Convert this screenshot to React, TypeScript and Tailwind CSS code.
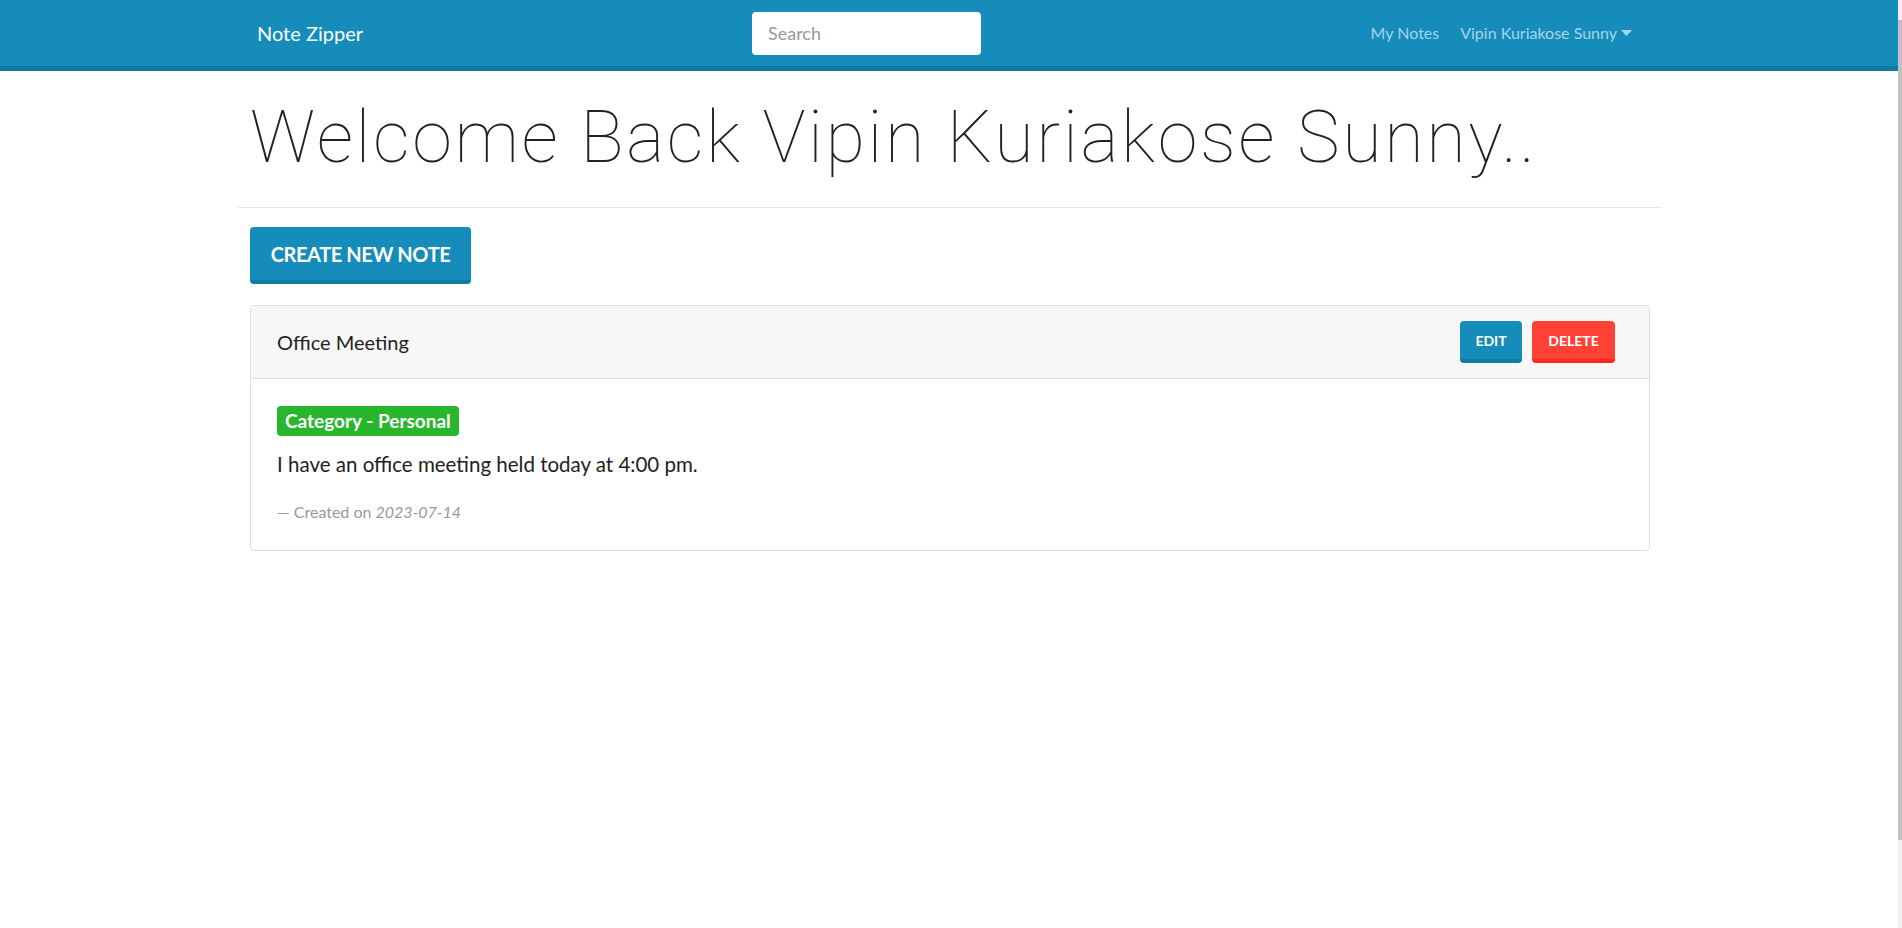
import React from "react";

const sans = { fontFamily: "Lato, 'Open Sans', sans-serif" };

function NavBar() {
  return (
    <nav className="h-[71px] bg-[#158cba] border-b-[5px] border-[#127ba3] flex items-center pl-[257px] pr-[266px]">
      <span className="text-[20px] text-white leading-none">Note Zipper</span>
      <div className="ml-[389px] w-[229px] h-[43px] bg-white rounded-[4px] flex items-center pl-[16px]">
        <span className="text-[18px] text-[#999]">Search</span>
      </div>
      <div className="ml-auto flex items-center gap-[21px] text-[16px] text-[#a6d5ea]">
        <span>My Notes</span>
        <span className="flex items-center gap-[4px]">
          Vipin Kuriakose Sunny
          <svg width="11" height="6" viewBox="0 0 11 6">
            <path d="M0 0 L11 0 L5.5 6 Z" fill="#a6d5ea" />
          </svg>
        </span>
      </div>
    </nav>
  );
}

function NoteCard() {
  return (
    <div className="ml-[12px] w-[1400px] border border-[#dddddd] rounded-[4px] overflow-hidden">
      {/* header */}
      <div className="h-[73px] bg-[#f7f7f7] border-b border-[#dddddd] flex items-center pl-[26px] pr-[34px]">
        <span className="text-[20px] text-[#222]">Office Meeting</span>
        <div className="ml-auto flex gap-[10px]">
          <button className="w-[62px] h-[42px] bg-[#158cba] border-b-4 border-[#127ba3] rounded-[4px] text-white text-[14px] font-bold">
            EDIT
          </button>
          <button className="w-[83px] h-[42px] bg-[#ff4136] border-b-4 border-[#ff291d] rounded-[4px] text-white text-[14px] font-bold">
            DELETE
          </button>
        </div>
      </div>

      {/* body */}
      <div className="pl-[26px] pt-[27px] pb-[26px]">
        <span className="inline-flex items-center h-[30px] px-[8px] bg-[#28b62c] rounded-[4px] text-white text-[19px] font-bold">
          Category - Personal
        </span>
        <p className="mt-[13px] text-[20.5px] leading-[30px] text-[#222]">
          I have an office meeting held today at 4:00 pm.
        </p>
        <p className="mt-[21px] text-[16px] leading-[24px] text-[#999]">
          — Created on <em>2023-07-14</em>
        </p>
      </div>
    </div>
  );
}

export default function App() {
  return (
    <div className="flex min-h-[928px] bg-white" style={sans}>
      <div className="flex-1">
        <NavBar />

        <main className="ml-[238px] w-[1424px]">
          <h1
            className="mt-[25px] pl-[12px] text-[72px] leading-[84px] font-thin tracking-[2.6px] text-[#222]"
            style={{ fontFamily: "Roboto, sans-serif" }}
          >
            Welcome Back Vipin Kuriakose Sunny..
          </h1>
          <hr className="mt-[27px] border-t border-[#e6e6e6]" />

          <div className="mt-[19px] pl-[12px]">
            <button className="w-[221px] h-[57px] bg-[#158cba] border-b-4 border-[#127ba3] rounded-[4px] text-white text-[20px] tracking-[-0.4px] font-bold">
              CREATE NEW NOTE
            </button>
          </div>

          <div className="mt-[21px]">
            <NoteCard />
          </div>
        </main>
      </div>

      {/* page scrollbar */}
      <div className="w-[4px] bg-[#f1f1f1] pt-[20px]">
        <div className="h-[820px] bg-[#c1c1c1]" />
      </div>
    </div>
  );
}
